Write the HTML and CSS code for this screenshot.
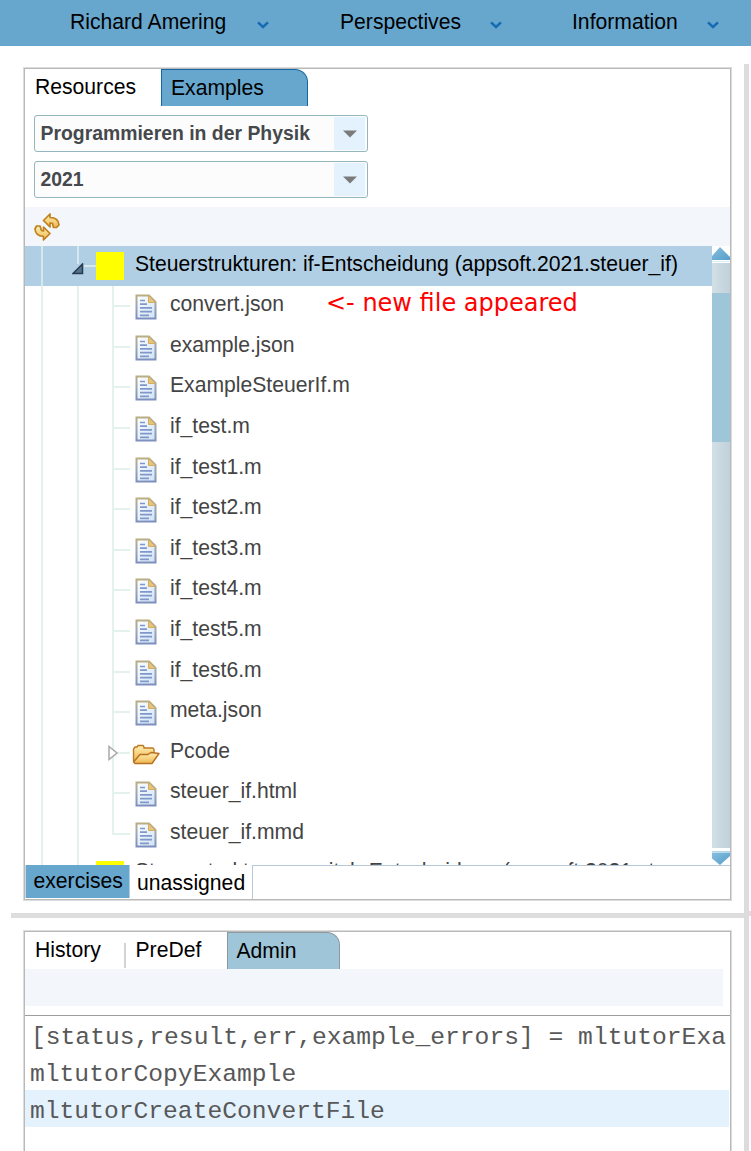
FILE: index.html
```
<!DOCTYPE html>
<html lang="de">
<head>
<meta charset="utf-8">
<title>Resources</title>
<link rel="stylesheet" href="styles.css">
</head>
<body>
<svg width="0" height="0" class="defs" aria-hidden="true">
  <defs>
    <linearGradient id="paper" x1="0" y1="0" x2="1" y2="1"><stop offset="0" stop-color="#fff"/><stop offset="1" stop-color="#cfe2f5"/></linearGradient>
    <linearGradient id="edge" x1="0" y1="0" x2="0" y2="1"><stop offset="0" stop-color="#b9ad84"/><stop offset=".5" stop-color="#98a5bb"/><stop offset="1" stop-color="#7d90bd"/></linearGradient>
    <linearGradient id="gold" x1="0" y1="0" x2="0" y2="1"><stop offset="0" stop-color="#fff0b4"/><stop offset="1" stop-color="#efb64f"/></linearGradient>
    <linearGradient id="blue" x1="0" y1="0" x2="1" y2="1"><stop offset="0" stop-color="#86bfdf"/><stop offset="1" stop-color="#579dc8"/></linearGradient>
    <symbol id="file" viewBox="0 0 22 26">
      <path d="M1.500 1.500H14L20.500 8V24.500H1.500Z" fill="url(#paper)" stroke="url(#edge)" stroke-width="2"/>
      <path d="M13.500 1.500V8.500H20.500Z" fill="#e8c478" stroke="#d0ae68"/>
      <path d="M5 6.500H10M5 10.200H12M5 13.900H17M5 17.600H17M5 21.300H14" stroke="#7f98cb" stroke-width="1.700"/>
    </symbol>
    <symbol id="folder" viewBox="0 0 28 21">
      <path d="M1.500 17V5L3 3H5L6 1.500H11L12 3V4H20Q22 4 22 6V10" fill="url(#gold)" stroke="#bd7a24" stroke-width="1.400"/>
      <path d="M1.500 18L8 10.500H16L19 8.500L27 9.500L20 19.500H3Z" fill="url(#gold)" stroke="#b96f20" stroke-width="1.400" stroke-linejoin="round"/>
    </symbol>
    <symbol id="down" viewBox="0 0 12 8"><path d="M1 1.300L6 6L11 1.300" fill="none" stroke="#176bb3" stroke-width="2.500"/></symbol>
  </defs>
</svg>
<header class="menu">
  <div class="menu-item user">Richard Amering<svg class="chev"><use href="#down"/></svg></div>
  <div class="menu-item persp">Perspectives<svg class="chev"><use href="#down"/></svg></div>
  <div class="menu-item info">Information<svg class="chev"><use href="#down"/></svg></div>
</header>
<main class="workspace">
  <div class="column">
    <section class="panel resources">
      <nav class="tabs"><span class="tab first">Resources</span><span class="tab examples">Examples</span></nav>
      <div class="filters">
        <div class="select"><span>Programmieren in der Physik</span><i class="drop"><svg viewBox="0 0 14 8"><path d="M0 .5H14L7 7.500Z" fill="#7b7b7b"/></svg></i></div>
        <div class="select year"><span>2021</span><i class="drop"><svg viewBox="0 0 14 8"><path d="M0 .5H14L7 7.500Z" fill="#7b7b7b"/></svg></i></div>
      </div>
      <div class="toolbar">
        <svg class="refresh" viewBox="0 0 26 28"><g fill="url(#gold)" stroke="#bf801e" stroke-width="1.700" stroke-linejoin="round"><path d="M9.500 7.500L16 1V4.500Q24.500 4.500 25 12L22.500 14.500H19.500L18.500 10.500L16 10V14Z"/><path d="M16 20.500L9.500 27V23.500Q1.500 23 1 16L2.500 13H6L7.500 17.500L9.500 18V14Z"/></g></svg>
      </div>
      <div class="tree-view">
        <div class="tree">
          <div class="row selected"><svg class="open" viewBox="0 0 12 12"><path d="M1 10.500L10.500 1V10.500Z" fill="#55718a" stroke="#263c52" stroke-width="1.500"/></svg><b class="dash"></b><b class="mark"></b><span class="title">Steuerstrukturen: if-Entscheidung (appsoft.2021.steuer_if)</span></div>
          <div class="files">
            <div class="row"><b class="dash"></b><svg class="file"><use href="#file"/></svg><span class="name">convert.json</span><span class="note">&lt;- new file appeared</span></div>
            <div class="row"><b class="dash"></b><svg class="file"><use href="#file"/></svg><span class="name">example.json</span></div>
            <div class="row"><b class="dash"></b><svg class="file"><use href="#file"/></svg><span class="name">ExampleSteuerIf.m</span></div>
            <div class="row"><b class="dash"></b><svg class="file"><use href="#file"/></svg><span class="name">if_test.m</span></div>
            <div class="row"><b class="dash"></b><svg class="file"><use href="#file"/></svg><span class="name">if_test1.m</span></div>
            <div class="row"><b class="dash"></b><svg class="file"><use href="#file"/></svg><span class="name">if_test2.m</span></div>
            <div class="row"><b class="dash"></b><svg class="file"><use href="#file"/></svg><span class="name">if_test3.m</span></div>
            <div class="row"><b class="dash"></b><svg class="file"><use href="#file"/></svg><span class="name">if_test4.m</span></div>
            <div class="row"><b class="dash"></b><svg class="file"><use href="#file"/></svg><span class="name">if_test5.m</span></div>
            <div class="row"><b class="dash"></b><svg class="file"><use href="#file"/></svg><span class="name">if_test6.m</span></div>
            <div class="row"><b class="dash"></b><svg class="file"><use href="#file"/></svg><span class="name">meta.json</span></div>
            <div class="row"><svg class="closed" viewBox="0 0 10 16"><path d="M1 1.500L9 8L1 14.500Z" fill="#fff" stroke="#a9a9a9" stroke-width="1.500"/></svg><b class="dash"></b><svg class="folder"><use href="#folder"/></svg><span class="name">Pcode</span></div>
            <div class="row"><b class="dash"></b><svg class="file"><use href="#file"/></svg><span class="name">steuer_if.html</span></div>
            <div class="row"><b class="dash"></b><svg class="file"><use href="#file"/></svg><span class="name">steuer_if.mmd</span></div>
          </div>
          <div class="row next"><b class="mark"></b><span class="title">Steuerstrukturen: switch-Entscheidung (appsoft.2021.steuer_switch)</span></div>
        </div>
        <div class="scroll">
          <svg class="arrow" viewBox="0 0 18 17"><path d="M0 10L8 1L18 11V14H0Z" fill="url(#blue)"/><path d="M0 15.500H18" stroke="#d9eef8"/></svg>
          <div class="track"><div class="thumb"></div></div>
          <svg class="arrow" viewBox="0 0 18 17"><path d="M0 4.500H18V8L8 17L0 10.500Z" fill="url(#blue)"/><path d="M0 3.500H18" stroke="#b4d7e8"/></svg>
        </div>
      </div>
      <nav class="bottom-tabs"><span class="exercises">exercises</span><span class="unassigned">unassigned</span><span class="rest"></span></nav>
    </section>
    <div class="splitter"></div>
    <section class="panel commands">
      <nav class="tabs"><span class="tab first history">History</span><b class="sep"></b><span class="tab predef">PreDef</span><span class="tab admin">Admin</span></nav>
      <div class="bar"></div>
      <ul class="list">
        <li class="long">[status,result,err,example_errors] = mltutorExa</li>
        <li>mltutorCopyExample</li>
        <li class="active">mltutorCreateConvertFile</li>
      </ul>
    </section>
  </div>
  <div class="divider"></div>
  <div class="stub"></div>
</main>
</body>
</html>
```
FILE: styles.css
```
* { box-sizing: border-box; }
body { margin: 0; width: 751px; height: 1151px; overflow: hidden; background: #fff; font: 21.15px/24px "Liberation Sans", Arial, sans-serif; color: #000; }
svg { display: block; flex: none; }
b, i { display: block; flex: none; }
.defs { position: absolute; }
.menu { display: flex; height: 46px; background: #67a7ce; padding-left: 70px; }
.menu-item { display: flex; justify-content: space-between; height: 44px; align-items: center; white-space: nowrap; }
.user { width: 199px; margin-right: 71px; }
.persp { width: 162px; margin-right: 70px; }
.info { width: 147px; }
.chev { width: 12px; height: 8px; margin-top: 5px; }
.workspace { display: flex; height: 1105px; }
.column { display: flex; flex-direction: column; width: 744px; padding-top: 22px; }
.panel { border: 1px solid #b9b9b9; box-shadow: 0 0 0 1px #dcdcdc; width: 707px; margin-left: 24px; flex: none; }
.resources { height: 832px; }
.splitter { height: 5px; margin: 13px 0 13px 11px; background: #ddd; flex: none; }
.commands { height: 240px; }
.divider { width: 5px; margin-top: 18px; background: #dcdcdc; }
.stub { width: 2px; height: 5px; margin-top: 865px; background: #ddd; }
.tabs { display: flex; height: 37px; }
.tab { padding: 6px 0 0 10px; }
.first { width: 136px; }
.examples { width: 147px; padding-left: 9px; background: #67a7ce; border: 1px solid #1466a5; border-bottom: 0; border-radius: 0 13px 0 0; }
.filters { height: 101px; padding: 9px; display: flex; flex-direction: column; gap: 9px; }
.select { width: 334px; height: 37px; display: flex; justify-content: space-between; border: 1px solid #94b6bf; border-radius: 3px; background: #fcfcfc; padding: 0 2px 0 5.5px; font-weight: bold; font-size: 19.4px; line-height: 35px; color: #45484c; }
.drop { width: 31px; height: 33px; margin-top: 1px; background: #e4f2fe; display: flex; align-items: center; justify-content: center; }
.drop svg { width: 14px; height: 8px; }
.toolbar { height: 39px; background: #f3f7fc; padding: 6px 9px; }
.refresh { width: 26px; height: 28px; }
.tree-view { display: flex; height: 619px; overflow: hidden; }
.tree { width: 687px; flex: none; overflow: hidden; background: linear-gradient(#e4f2ec, #e4f2ec) 16px 0 / 2px 100% no-repeat, linear-gradient(#e4f2ec, #e4f2ec) 52px 0 / 2px 100% no-repeat; }
.row { display: flex; height: 40.6px; align-items: center; white-space: nowrap; color: #444; flex: none; }
.selected { height: 40px; color: #000; padding-left: 47px; background: linear-gradient(#d5e9ec, #d5e9ec) 16px 0 / 2px 100% no-repeat, linear-gradient(#d5e9ec, #d5e9ec) 52px 0 / 2px 18px no-repeat, #b1cfe4; }
.open { width: 12px; height: 12px; margin-top: 5px; }
.dash { height: 2px; background: #e4f2ec; }
.selected .dash { width: 12px; background: #d5e9ec; }
.mark { width: 28px; height: 28px; background: #ff0; }
.title { padding-left: 11px; margin-top: -5px; }
.files { padding-left: 87px; height: 568.4px; background: linear-gradient(#e4f2ec, #e4f2ec) 87px 0 / 2px 548px no-repeat; }
.files .dash { width: 18px; }
.file { width: 22px; height: 26px; margin: 2px 0 0 5px; }
.name { margin: -4px 0 0 13px; }
.note { margin: -6px 0 0 42px; color: #f00; font: 24px/28px "DejaVu Sans", sans-serif; }
.closed { width: 10px; height: 16px; margin: 1px 0 0 -4px; }
.closed + .dash { width: 12px; }
.folder { width: 28px; height: 21px; margin: 4px 0 0 2px; }
.closed ~ .name { margin-left: 10px; }
.next { padding-left: 71px; }
.next .title { margin-top: -7px; }
.scroll { width: 18px; display: flex; flex-direction: column; }
.arrow { width: 18px; height: 17px; }
.track { flex: 1; padding-top: 30px; background: linear-gradient(90deg, #d2e0e6, #c1d1da); }
.thumb { height: 149px; background: #9fc5d8; }
.bottom-tabs { display: flex; height: 34px; }
.exercises { width: 105px; height: 33px; padding: 4px 0 0 7.5px; background: #67a7ce; border-left: 1px solid #c8d8e2; border-right: 1px solid #b1cfe4; }
.unassigned { width: 122px; padding: 6px 0 0 7px; }
.rest { flex: 1; border: solid #b5c9d8; border-width: 1px 0 0 1px; }
.history { width: 99px; }
.sep { width: 2px; height: 25px; margin-top: 11px; background: #d4d4d4; }
.predef { width: 101px; padding-left: 9.5px; }
.admin { width: 113px; background: #9fc5d8; border: 1px solid #8c989e; border-bottom: 0; border-radius: 0 13px 0 0; padding-left: 8.5px; }
.bar { height: 37px; width: 698px; background: #f3f7fc; }
.list { margin: 9px 0 0; padding: 0; list-style: none; border-top: 1px solid #9d9d9d; font: 24.65px/42px "Liberation Mono", monospace; color: #585858; }
.list li { height: 37px; padding-left: 5px; white-space: nowrap; margin-right: 1px; }
.list .long { padding-left: 6px; }
.list .active { background: #e4f2fe; }
```
